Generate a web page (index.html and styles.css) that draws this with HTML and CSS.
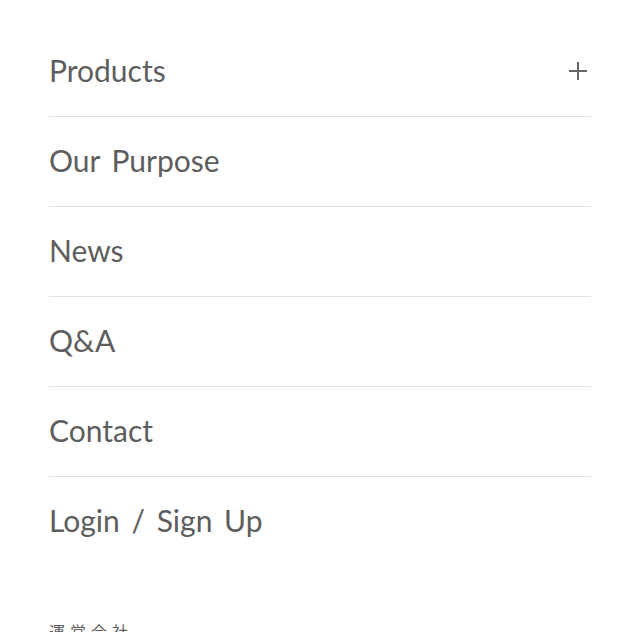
FILE: index.html
```html
<!DOCTYPE html>
<html lang="ja">
<head>
    <meta charset="UTF-8">
    <meta name="viewport" content="width=device-width, initial-scale=1.0">
    <title>Menu</title>
    <link rel="stylesheet" href="styles.css">
</head>
<body>
    <nav class="menu">
        <ul class="menu-list">
            <li class="menu-item">
                <a href="#">Products</a>
                <span class="plus"></span>
            </li>
            <li class="menu-item"><a href="#">Our Purpose</a></li>
            <li class="menu-item"><a href="#">News</a></li>
            <li class="menu-item"><a href="#">Q&amp;A</a></li>
            <li class="menu-item"><a href="#">Contact</a></li>
            <li class="menu-item last"><a href="#">Login / Sign Up</a></li>
        </ul>

        <!-- 運営会社 -->
        <div class="company">運営会社</div>
    </nav>
</body>
</html>
```

FILE: styles.css
```css
body {
    margin: 0;
    background: #fff;
    font-family: "Lato", "Noto Sans CJK JP", sans-serif;
    color: #5e5e5e;
}

.menu {
    padding: 27px 49px 0 49px;
    height: 632px;
    box-sizing: border-box;
    overflow: hidden;
}

.menu-list {
    list-style: none;
    margin: 0;
    padding: 0;
}

.menu-item {
    display: flex;
    align-items: center;
    justify-content: space-between;
    height: 89px;
    border-bottom: 1px solid #e2e2e2;
}

.menu-item.last {
    border-bottom: none;
}

.menu-item a {
    color: #5e5e5e;
    text-decoration: none;
    font-size: 30px;
    word-spacing: 4px;
    padding-bottom: 4px;
}

.plus {
    position: relative;
    width: 18px;
    height: 18px;
    margin: 0 4px 2px 0;
}

.plus::before,
.plus::after {
    content: "";
    position: absolute;
    background: #666;
}

.plus::before {
    left: 0;
    top: 8px;
    width: 18px;
    height: 2px;
}

.plus::after {
    left: 8px;
    top: 0;
    width: 2px;
    height: 18px;
}

.company {
    margin-top: 53px;
    font-size: 16px;
    letter-spacing: 5px;
    color: #5e5e5e;
}
```
